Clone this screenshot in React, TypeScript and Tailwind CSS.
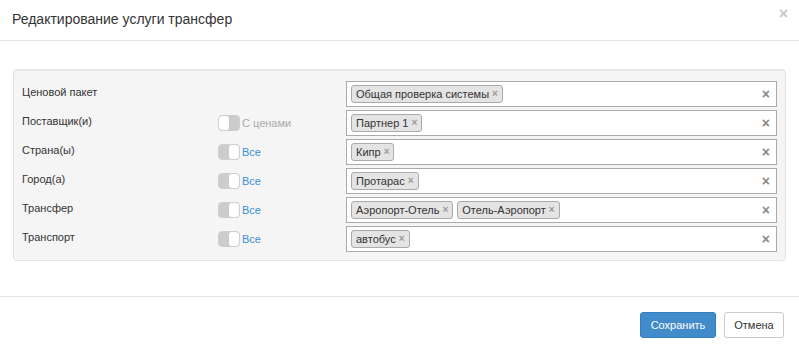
const rows: { label: string; toggle?: 'on' | 'off'; toggleText?: string; tags: string[] }[] = [
  { label: 'Ценовой пакет', tags: ['Общая проверка системы'] },
  { label: 'Поставщик(и)', toggle: 'off', toggleText: 'С ценами', tags: ['Партнер 1'] },
  { label: 'Страна(ы)', toggle: 'on', toggleText: 'Все', tags: ['Кипр'] },
  { label: 'Город(а)', toggle: 'on', toggleText: 'Все', tags: ['Протарас'] },
  { label: 'Трансфер', toggle: 'on', toggleText: 'Все', tags: ['Аэропорт-Отель', 'Отель-Аэропорт'] },
  { label: 'Транспорт', toggle: 'on', toggleText: 'Все', tags: ['автобус'] },
]

function Toggle({ on }: { on: boolean }) {
  return (
    <div className="flex h-[16px] w-[22px] overflow-hidden rounded-[4px] border border-[#cfcfcf] bg-[#d0d0d0]">
      {on ? (
        <>
          <div className="w-[11px] bg-[#cccccc]" />
          <div className="w-[11px] rounded-[3px] bg-white" />
        </>
      ) : (
        <>
          <div className="w-[11px] rounded-[3px] bg-white" />
          <div className="w-[11px] bg-[#cccccc]" />
        </>
      )}
    </div>
  )
}

export default function App() {
  return (
    <div className="w-[799px] h-[349px] bg-white text-[#333] font-['Liberation_Sans',Arial,sans-serif]">
      {/* header */}
      <div className="flex h-[41px] items-center justify-between border-b border-[#e5e5e5] pl-[12px] pr-[11px]">
        <h4 className="text-[14px] leading-none pb-[2px]">Редактирование услуги трансфер</h4>
        <span className="text-[16px] font-bold leading-none text-[#c8c8c8] -mt-[12px]">×</span>
      </div>

      {/* body */}
      <div className="px-[13px] pt-[28px] pb-[35px]">
        <div className="rounded-[4px] border border-[#e3e3e3] bg-[#f5f5f5] pl-[8px] pr-[8px] pt-[11px] pb-[8px] shadow-[inset_0_1px_1px_rgba(0,0,0,0.05)]">
          <div className="flex flex-col gap-[3px]">
            {rows.map((r) => (
              <div key={r.label} className="flex h-[26px] items-center">
                <div className="w-[196px] text-[11px] -mt-[4px]">{r.label}</div>
                <div className="flex w-[128px] items-center">
                  {r.toggle && (
                    <>
                      <Toggle on={r.toggle === 'on'} />
                      <span
                        className={`ml-[2px] text-[11px] ${
                          r.toggle === 'on' ? 'text-[#3a8fd6]' : 'text-[#aaa]'
                        }`}
                      >
                        {r.toggleText}
                      </span>
                    </>
                  )}
                </div>
                <div className="flex h-[26px] flex-1 items-center border border-[#aaa] bg-white pl-[4px] pr-[6px]">
                  <div className="flex flex-1 gap-[4px]">
                    {r.tags.map((t) => (
                      <span
                        key={t}
                        className="flex h-[18px] items-center rounded-[3px] border border-[#aaa] bg-[#e4e4e4] px-[4px] text-[11px] leading-none text-[#333]"
                      >
                        {t}
                        <span className="ml-[3px] text-[10px] font-bold text-[#999]">×</span>
                      </span>
                    ))}
                  </div>
                  <span className="text-[14px] font-bold leading-none text-[#888]">×</span>
                </div>
              </div>
            ))}
          </div>
        </div>
      </div>

      {/* footer */}
      <div className="flex justify-end gap-[8px] border-t border-[#e5e5e5] pt-[15px] pr-[15px]">
        <button className="h-[26px] w-[76px] rounded-[3px] border border-[#357ebd] bg-[#428bca] text-[11px] text-white">
          Сохранить
        </button>
        <button className="h-[26px] w-[60px] rounded-[3px] border border-[#ccc] bg-white text-[11px] text-[#333]">
          Отмена
        </button>
      </div>
    </div>
  )
}
